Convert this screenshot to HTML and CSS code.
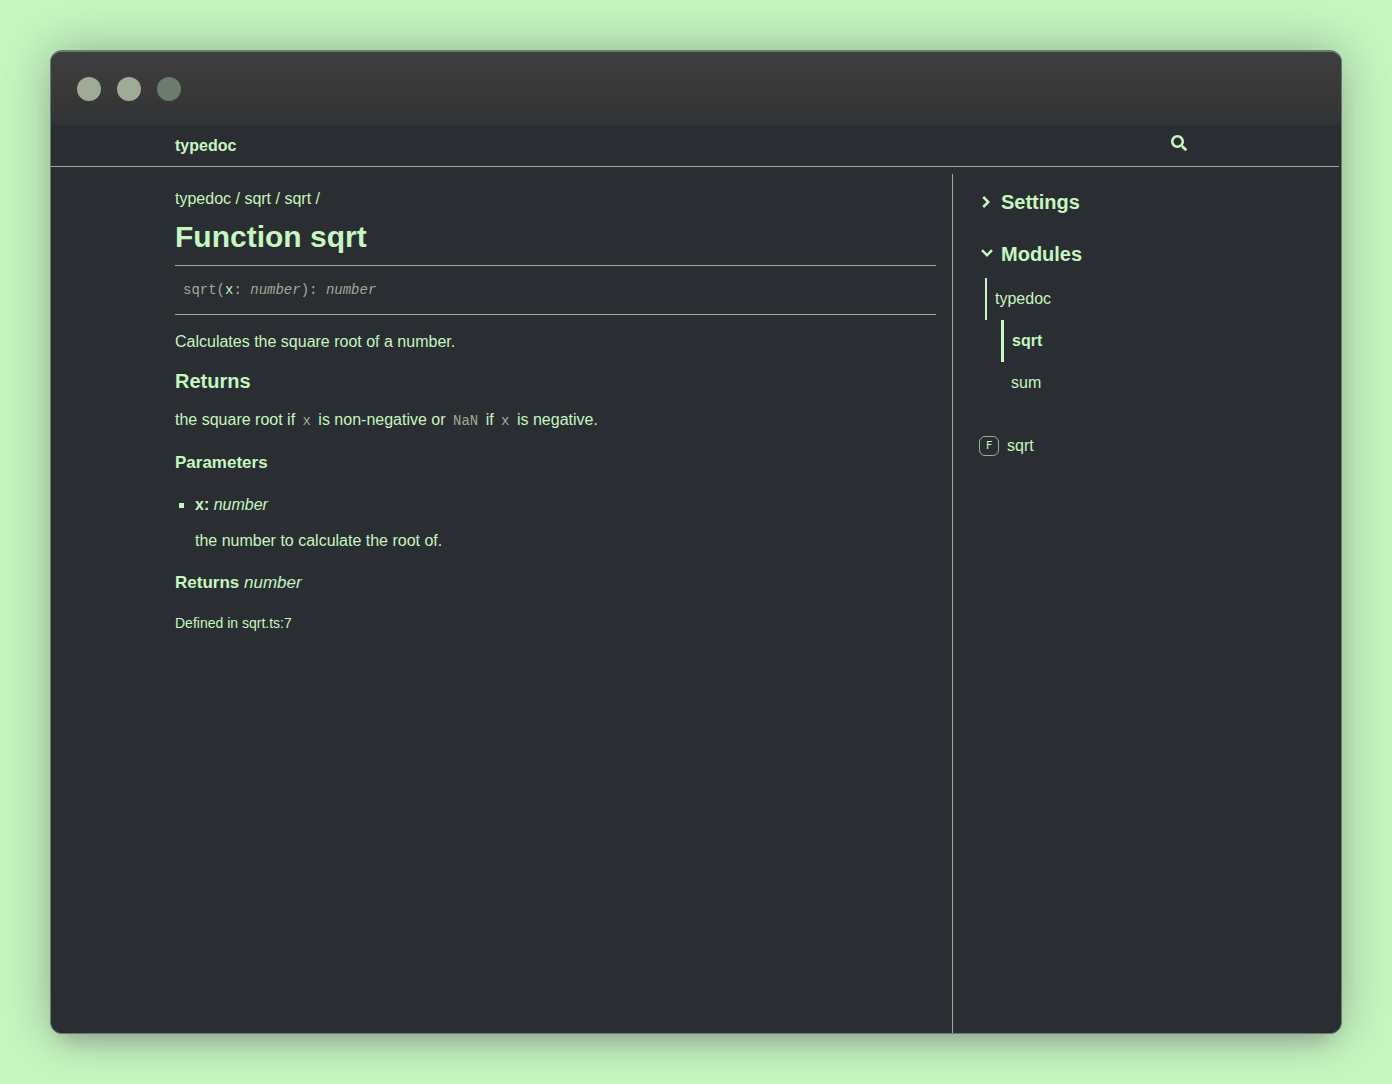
FILE: index.html
```html
<!DOCTYPE html>
<html lang="en">
<head>
<meta charset="utf-8">
<title>sqrt | typedoc</title>
<link rel="stylesheet" href="styles.css">
</head>
<body>
<div class="window">
  <div class="titlebar">
    <span class="dot"></span><span class="dot"></span><span class="dot dot-dim"></span>
  </div>
  <div class="doc">
    <header class="toolbar">
      <a class="brand" href="#">typedoc</a>
      <button class="search" type="button" aria-label="Search">
        <svg width="16" height="16" viewBox="0 0 16 16" fill="currentColor"><path d="M15.7824 13.833L12.6666 10.7177C12.5259 10.5771 12.3353 10.499 12.1353 10.499H11.6259C12.4884 9.39596 13.001 8.00859 13.001 6.49937C13.001 2.90909 10.0914 0 6.50048 0C2.90959 0 0 2.90909 0 6.49937C0 10.0896 2.90959 12.9987 6.50048 12.9987C8.00996 12.9987 9.39756 12.4863 10.5008 11.6239V12.1332C10.5008 12.3332 10.5789 12.5238 10.7195 12.6644L13.8354 15.7797C14.1292 16.0734 14.6042 16.0734 14.8948 15.7797L15.7793 14.8954C16.0731 14.6017 16.0731 14.1267 15.7824 13.833ZM6.50048 10.499C4.29094 10.499 2.50018 8.71165 2.50018 6.49937C2.50018 4.29021 4.28781 2.49976 6.50048 2.49976C8.71001 2.49976 10.5008 4.28708 10.5008 6.49937C10.5008 8.70852 8.71314 10.499 6.50048 10.499Z"/></svg>
      </button>
    </header>
    <div class="columns">
      <main class="content">
        <nav class="breadcrumb" aria-label="Breadcrumb"><a href="#">typedoc</a> / <a href="#">sqrt</a> / <a href="#">sqrt</a> /</nav>
        <h1>Function sqrt</h1>
        <div class="signature">sqrt(<span class="param">x</span>: <i>number</i>): <i>number</i></div>
        <p>Calculates the square root of a number.</p>
        <h3>Returns</h3>
        <p class="returns">the square root if <code>x</code> is non-negative or <code>NaN</code> if <code>x</code> is negative.</p>
        <h4>Parameters</h4>
        <ul class="params">
          <li>
            <div><b>x:</b> <i>number</i></div>
            <p>the number to calculate the root of.</p>
          </li>
        </ul>
        <h4>Returns <i>number</i></h4>
        <p class="source">Defined in <a href="#">sqrt.ts:7</a></p>
      </main>
      <aside class="sidebar">
        <details>
          <summary><svg class="chevron" width="20" height="20" viewBox="0 0 24 24" fill="currentColor"><path d="M4.939 8.531L12 15.591L19.061 8.531L16.939 6.409L12 11.349L7.061 6.409Z"/></svg>Settings</summary>
        </details>
        <details open>
          <summary><svg class="chevron" width="20" height="20" viewBox="0 0 24 24" fill="currentColor"><path d="M4.939 8.531L12 15.591L19.061 8.531L16.939 6.409L12 11.349L7.061 6.409Z"/></svg>Modules</summary>
          <ul class="tree">
            <li><a class="open" href="#">typedoc</a>
              <ul>
                <li><a class="current" href="#">sqrt</a></li>
                <li><a href="#">sum</a></li>
              </ul>
            </li>
          </ul>
        </details>
        <a class="member" href="#"><span class="kind">F</span>sqrt</a>
      </aside>
    </div>
  </div>
</div>
</body>
</html>
```
FILE: styles.css
```css
* { box-sizing: border-box; }

body {
  margin: 0;
  padding: 50px;
  min-height: 100vh;
  display: flex;
  background: #c5f7bf;
  color: #c5f7bf;
  font: 16px/20px "Liberation Sans", Arial, sans-serif;
}

a { color: inherit; text-decoration: none; }

.window {
  flex: 1;
  display: flex;
  flex-direction: column;
  border: 1px solid #6b7b6c;
  border-top-width: 2px;
  border-radius: 12px;
  background: #2a2d32;
  box-shadow: 0 0 48px rgba(80, 90, 90, 0.45), 0 18px 20px -12px rgba(120, 90, 120, 0.35);
  overflow: hidden;
}

.titlebar {
  display: flex;
  align-items: center;
  gap: 16px;
  height: 73px;
  padding: 0 26px;
  background: linear-gradient(#403f3f, #3a3a3a 40%, #323335);
}

.dot {
  width: 24px;
  height: 24px;
  border-radius: 50%;
  background: #a0ab97;
}

.dot-dim { background: #6b7b6c; }

.doc {
  flex: 1;
  display: flex;
  flex-direction: column;
  padding-right: 2px;
}

.toolbar {
  display: flex;
  justify-content: space-between;
  align-items: center;
  height: 42px;
  padding: 0 152px 0 124px;
  border-bottom: 1px solid #a0ab97;
}

.brand { font-weight: bold; }

.search {
  display: flex;
  padding: 0 0 5px;
  border: 0;
  background: none;
  color: inherit;
}

.columns {
  flex: 1;
  display: grid;
  grid-template-columns: 1fr 387px;
  column-gap: 16px;
  padding-left: 124px;
}

.content { padding-top: 22px; }

p, h1, h3, h4, ul { margin: 0; padding: 0; }

h1 {
  margin-top: 10px;
  padding-bottom: 10px;
  border-bottom: 1px solid #a0ab97;
  font-size: 30px;
  line-height: 36px;
}

.signature {
  margin-bottom: 17px;
  padding: 14px 8px;
  border-bottom: 1px solid #a0ab97;
  color: #a0ab97;
  font: 14px/20px "Liberation Mono", "Courier New", monospace;
}

.param { color: #c5f7bf; }

h3 {
  margin: 17px 0;
  font-size: 20px;
  line-height: 24px;
}

h4 {
  margin: 22px 0;
  font-size: 17px;
}

h4 i { font-weight: normal; }

code {
  padding: 0 3px;
  color: #a0ab97;
  font: 14px/16px "Liberation Mono", "Courier New", monospace;
}

.returns { margin-bottom: 23px; }

.params {
  padding-left: 20px;
  list-style: square;
}

.params p { margin-top: 16px; }

.source {
  font-size: 14px;
  line-height: 16px;
}

.sidebar {
  margin-top: 7px;
  padding: 16px 24px;
  border-left: 1px solid #a0ab97;
}

summary {
  display: flex;
  align-items: center;
  gap: 4px;
  margin-bottom: 28px;
  font-size: 20px;
  font-weight: bold;
  line-height: 24px;
  list-style: none;
}

.chevron { transform: rotate(-90deg); }

[open] .chevron { transform: none; }

[open] summary { margin-bottom: 12px; }

.tree {
  margin: 0 0 32px 8px;
  list-style: none;
}

.tree ul {
  margin-left: 16px;
  list-style: none;
}

.tree a {
  display: block;
  padding: 11px 8px;
  border-left: 2px solid transparent;
}

.tree .open { border-color: #c5f7bf; }

.tree .current {
  border-left: 3px solid #c5f7bf;
  font-weight: bold;
}

.member {
  display: flex;
  align-items: center;
  gap: 8px;
  padding-left: 2px;
}

.kind {
  width: 20px;
  height: 20px;
  border: 1px solid #a0ab97;
  border-radius: 6px;
  font: 11px/18px "DejaVu Sans Mono", monospace;
  text-align: center;
}
```
